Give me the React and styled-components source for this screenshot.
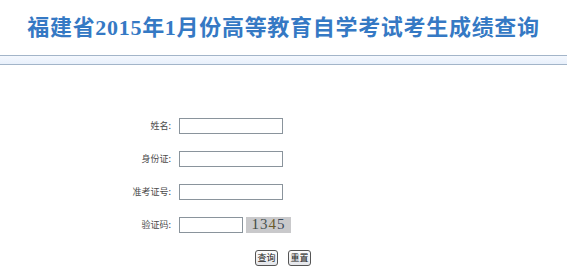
import React from 'react';
import styled, { createGlobalStyle } from 'styled-components';

const COLORS = {
  title: '#3579c4',
  label: '#4a4a4a',
  inputBorder: '#8a949c',
  barBorder: '#a3b5c9',
  barFill: '#e8f0fb',
};

const Global = createGlobalStyle`
  body {
    margin: 0;
    background: #fff;
    font-family: "SimSun", "Noto Sans CJK SC", sans-serif;
  }
`;

const Page = styled.main`
  width: 567px;
  height: 275px;
  overflow: hidden;
`;

const Title = styled.h1`
  margin: 0;
  height: 55px;
  display: flex;
  align-items: center;
  justify-content: center;
  padding-bottom: 6px;
  box-sizing: border-box;
  font-family: "Liberation Serif", "Noto Sans CJK SC", serif;
  font-size: 22px;
  font-weight: 700;
  color: ${COLORS.title};
  letter-spacing: 0.7px;
`;

const Bar = styled.div`
  height: 8px;
  border-top: 1px solid ${COLORS.barBorder};
  border-bottom: 1px solid ${COLORS.barBorder};
  background: linear-gradient(#f4f8fe, ${COLORS.barFill});
`;

const Form = styled.form`
  display: grid;
  grid-template-columns: 177px auto;
  grid-auto-rows: 33px;
  align-items: center;
  column-gap: 2px;
  padding-top: 44px;
`;

const Label = styled.label`
  text-align: right;
  padding-right: 6px;
  font-size: 9px;
  color: ${COLORS.label};
  font-family: "Noto Sans CJK SC", sans-serif;
`;

const Field = styled.div`
  display: flex;
  align-items: center;
  gap: 3px;
`;

const Input = styled.input`
  width: ${p => p.$w}px;
  height: 16px;
  box-sizing: border-box;
  border: 1px solid ${COLORS.inputBorder};
  padding: 0 2px;
  margin: 0;
  background: #fff;
  outline: none;
`;

const Captcha = styled.span`
  width: 45px;
  height: 16px;
  background: #c9c9cb;
  display: inline-flex;
  align-items: center;
  justify-content: center;
  font-family: "Liberation Serif", serif;
  font-size: 15px;
  letter-spacing: 1px;
  color: #444a50;
`;

const Digit = styled.span`
  color: ${p => p.$c};
`;

const Actions = styled.div`
  grid-column: 1 / 3;
  display: flex;
  justify-content: flex-start;
  gap: 10px;
  padding-left: 255px;
`;

const Btn = styled.button`
  width: 23px;
  height: 16px;
  padding: 0;
  border: 1px solid #555;
  border-radius: 3px;
  background: linear-gradient(#fcfcfc, #e4e6ea);
  font-family: "Noto Sans CJK SC", sans-serif;
  font-size: 9px;
  color: #222;
  line-height: 14px;
`;

const rows = [
  { label: '姓名:', width: 104 },
  { label: '身份证:', width: 104 },
  { label: '准考证号:', width: 104 },
];

export default function App() {
  return (
    <Page>
      <Global />
      <Title>福建省2015年1月份高等教育自学考试考生成绩查询</Title>
      <Bar />
      <Form onSubmit={e => e.preventDefault()}>
        {rows.map(r => (
          <React.Fragment key={r.label}>
            <Label>{r.label}</Label>
            <Field>
              <Input $w={r.width} />
            </Field>
          </React.Fragment>
        ))}
        <Label>验证码:</Label>
        <Field>
          <Input $w={64} />
          <Captcha>
            <Digit $c="#3f4a44">1</Digit>
            <Digit $c="#4a5452">3</Digit>
            <Digit $c="#6b5a2a">4</Digit>
            <Digit $c="#3b4a5a">5</Digit>
          </Captcha>
        </Field>
        <Actions>
          <Btn type="submit">查询</Btn>
          <Btn type="reset">重置</Btn>
        </Actions>
      </Form>
    </Page>
  );
}
